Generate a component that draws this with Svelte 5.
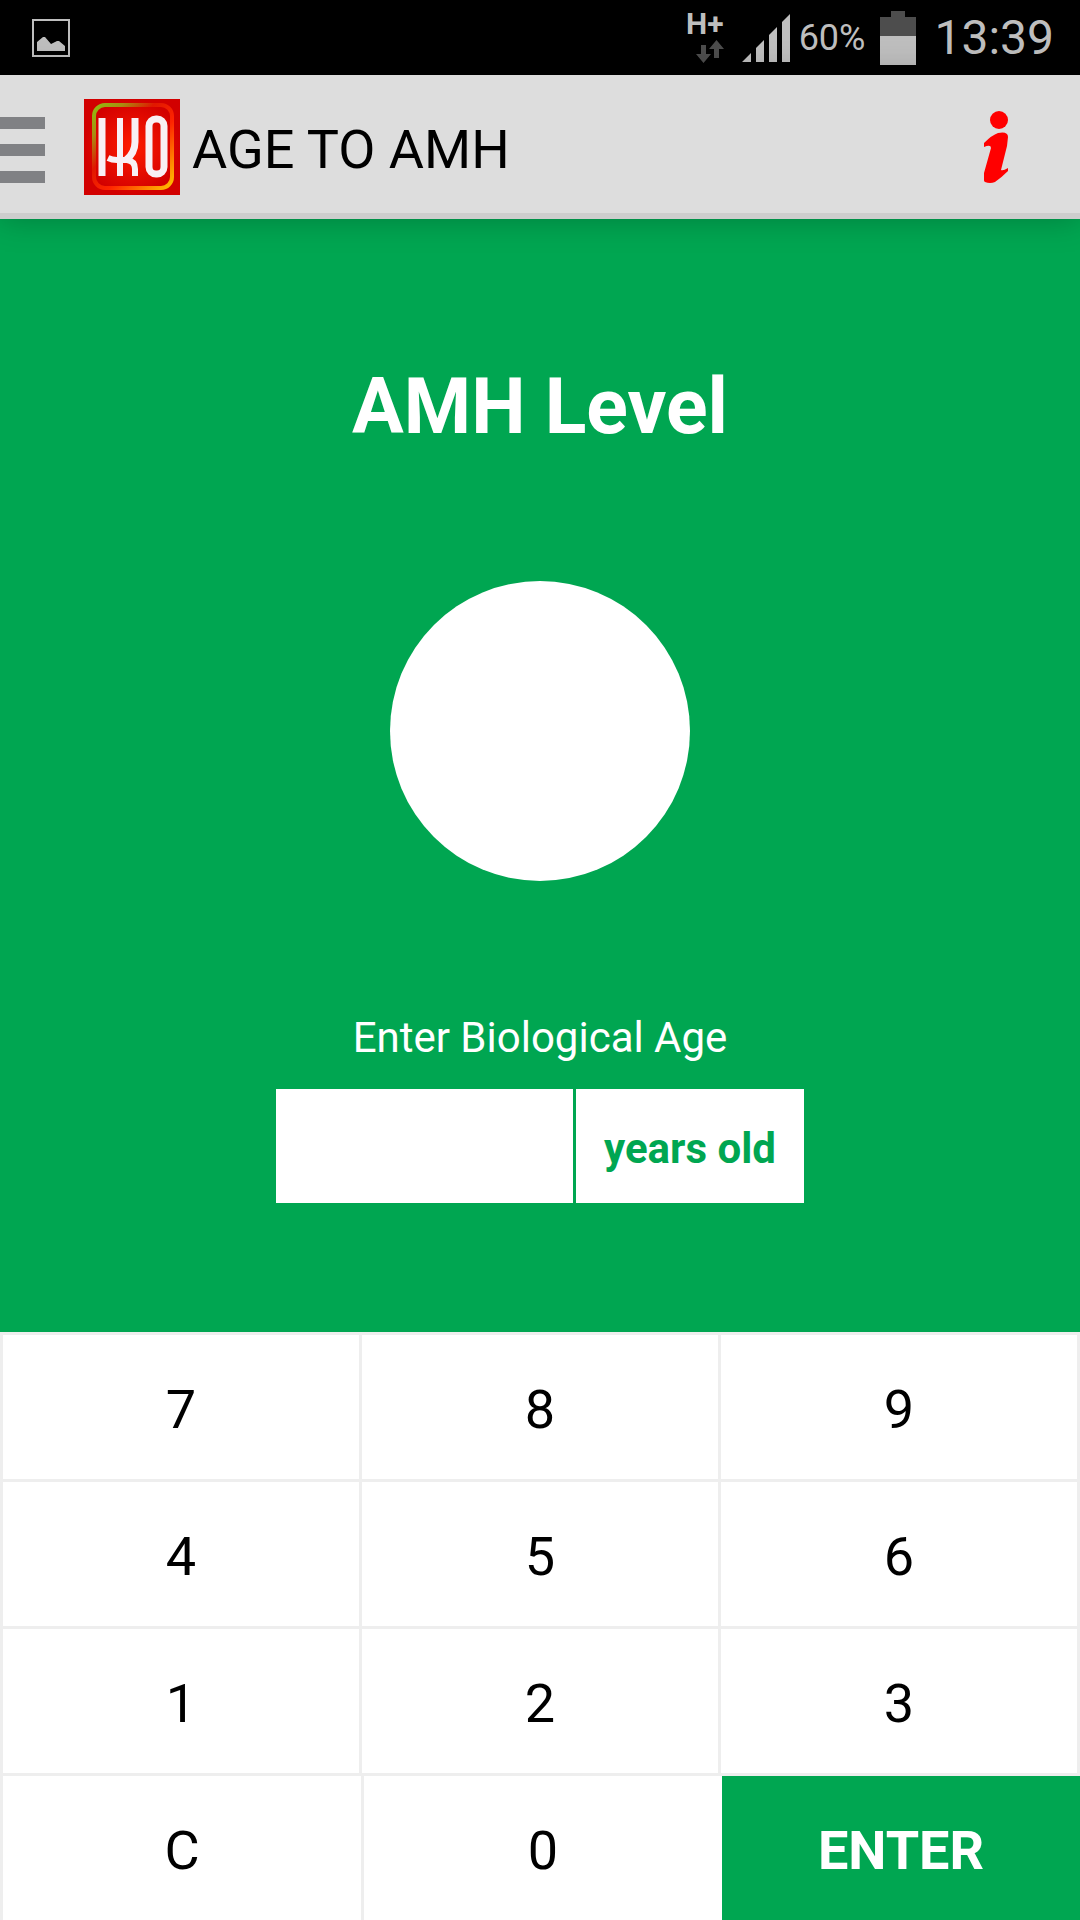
<script>
	const keyRows = [
		['7', '8', '9'],
		['4', '5', '6'],
		['1', '2', '3']
	];

	const MAX_DIGITS = 2;

	let age = $state('');
	let level = $state('');

	/** @param {string} digit */
	function press(digit) {
		if (age.length >= MAX_DIGITS) return;
		age += digit;
	}

	function clear() {
		age = '';
		level = '';
	}
</script>

<div class="screen">
	<div class="status-bar">
		<svg class="picture-icon" viewBox="0 0 38 38" aria-hidden="true">
			<rect x="1" y="1" width="36" height="36" fill="none" stroke="#bebebe" stroke-width="2" />
			<path d="M5 32V23L11 18H13L19 25L25 22H27L33 27V32Z" fill="#bebebe" />
		</svg>

		<div class="status-right">
			<div class="network">
				<span class="network-type">H+</span>
				<svg viewBox="0 0 28 23" aria-hidden="true">
					<path d="M5 5H10V14H15L7.500 23L0 14H5Z" fill="#4d4d4d" />
					<path d="M18 18H23V9H28L20.500 0L13 9H18Z" fill="#4d4d4d" />
				</svg>
			</div>
			<svg class="signal-icon" viewBox="0 0 48 48" aria-hidden="true">
				<path
					d="M0 48L9 39V48ZM14 48V34L22 26V48ZM27 48V21L35 13V48ZM40 48V8L48 0V48Z"
					fill="#bebebe"
				/>
			</svg>
			<span class="percent">60%</span>
			<svg class="battery-icon" viewBox="0 0 36 54" aria-hidden="true">
				<path d="M11 0H25V6H36V25H0V6H11Z" fill="#4d4d4d" />
				<rect y="25" width="36" height="29" fill="#bebebe" />
			</svg>
			<time class="clock">13:39</time>
		</div>
	</div>

	<header class="app-bar">
		<button type="button" class="menu-btn" aria-label="Open menu">
			<span></span>
			<span></span>
			<span></span>
		</button>
		<svg class="logo" viewBox="0 0 96 96" role="img" aria-label="IKO">
			<defs>
				<radialGradient id="logo-bg">
					<stop offset="0" stop-color="#ff1c00" />
					<stop offset="1" stop-color="#d20000" />
				</radialGradient>
				<linearGradient id="logo-frame" x1="0" y1="0" x2="1" y2="1">
					<stop offset="0" stop-color="#8fbe10" />
					<stop offset="0.180" stop-color="#a98c10" />
					<stop offset="0.380" stop-color="#e01800" />
					<stop offset="0.600" stop-color="#ff2400" />
					<stop offset="0.850" stop-color="#ff8a00" />
					<stop offset="1" stop-color="#ffc000" />
				</linearGradient>
			</defs>
			<rect width="96" height="96" fill="#d20000" />
			<rect width="96" height="96" fill="url(#logo-bg)" />
			<rect x="10" y="6" width="78" height="83" rx="11" fill="none" stroke="url(#logo-frame)" stroke-width="4" />
			<g fill="none" stroke="#f8f0f4" stroke-width="6">
				<path d="M18 19V77" stroke-width="7" />
				<path d="M36 19V77" />
				<path d="M51 19V43Q51 54 42 61" stroke-width="7" />
				<path d="M24 59Q28 61 33 61H43Q51 62 51 70V77" />
				<rect x="65" y="20" width="15" height="55" rx="7" stroke-width="7" />
			</g>
		</svg>
		<h1>AGE TO AMH</h1>
		<button type="button" class="info-btn" aria-label="Information">
			<svg viewBox="0 0 24 72" aria-hidden="true">
				<circle cx="15" cy="9" r="9" fill="#f00" />
				<path
					d="M0 32Q8 24 14 22Q24 20 24 26L23 35L17 59Q19 60 24 57V60Q17 67 11 71Q6 73 1 71Q-1 70 0 62L7 37Q7 33 0 36Z"
					fill="#f00"
				/>
			</svg>
		</button>
	</header>

	<main class="result">
		<h2>AMH Level</h2>
		<output class="level" for="age">{level}</output>
		<label for="age">Enter Biological Age</label>
		<div class="age-field">
			<input id="age" type="text" inputmode="none" maxlength={MAX_DIGITS} bind:value={age} />
			<span class="unit">years old</span>
		</div>
	</main>

	<div class="keypad">
		{#each keyRows as row}
			<div class="key-row">
				{#each row as digit}
					<button type="button" class="key" onclick={() => press(digit)}>{digit}</button>
				{/each}
			</div>
		{/each}
		<div class="key-row last">
			<button type="button" class="key" onclick={clear}>C</button>
			<button type="button" class="key zero" onclick={() => press('0')}>0</button>
			<button type="button" class="key enter">ENTER</button>
		</div>
	</div>
</div>

<style>
	:global(body) {
		margin: 0;
	}

	.screen {
		display: flex;
		flex-direction: column;
		min-height: 100vh;
		background: #00a651;
		font-family: Roboto, 'Noto Sans', sans-serif;
	}

	button {
		padding: 0;
		border: none;
		border-radius: 0;
		background: transparent;
		font-family: inherit;
		cursor: pointer;
	}

	/* Status bar */
	.status-bar {
		display: flex;
		align-items: center;
		justify-content: space-between;
		height: 75px;
		padding: 0 26px 0 32px;
		background: #000;
		color: #bebebe;
	}

	.picture-icon {
		width: 38px;
		height: 38px;
	}

	.status-right {
		display: flex;
		align-items: center;
	}

	.network {
		display: flex;
		flex-direction: column;
		gap: 4px;
		align-items: flex-end;
		margin-right: 18px;
	}

	.network-type {
		font-size: 30px;
		font-weight: 700;
		line-height: 24px;
	}

	.network svg {
		width: 28px;
		height: 23px;
	}

	.signal-icon {
		width: 48px;
		height: 48px;
		margin-right: 9px;
	}

	.percent {
		margin-right: 15px;
		font-size: 36px;
	}

	.battery-icon {
		width: 36px;
		height: 54px;
		margin-right: 18px;
	}

	.clock {
		font-size: 48px;
	}

	/* App bar */
	.app-bar {
		display: flex;
		align-items: center;
		height: 138px;
		padding-right: 72px;
		border-bottom: 6px solid #cdcdcd;
		background: #ddd;
		box-shadow: 0 0 30px rgba(0, 0, 0, 0.25);
	}

	.menu-btn {
		display: flex;
		flex-direction: column;
		gap: 15px;
		width: 45px;
		margin: 12px 39px 0 0;
	}

	.menu-btn span {
		height: 12px;
		background: #808184;
	}

	.logo {
		width: 96px;
		height: 96px;
		margin-top: 6px;
	}

	h1 {
		flex: 1;
		margin: 12px 0 0 12px;
		font-size: 54px;
		font-weight: 400;
		line-height: 64px;
		color: #000;
	}

	.info-btn {
		margin-top: 6px;
	}

	.info-btn svg {
		display: block;
		width: 24px;
		height: 72px;
	}

	/* Result panel */
	.result {
		display: flex;
		flex: 1;
		flex-direction: column;
		align-items: center;
		color: #fff;
	}

	h2 {
		margin: 142px 0 128px;
		font-size: 77px;
		font-weight: 700;
		line-height: 92px;
	}

	.level {
		display: flex;
		align-items: center;
		justify-content: center;
		width: 300px;
		height: 300px;
		border-radius: 50%;
		background: #fff;
		color: #00a651;
		font-size: 77px;
		font-weight: 700;
	}

	label {
		margin: 132px 0 26px;
		font-size: 42px;
		line-height: 50px;
	}

	.age-field {
		display: flex;
		gap: 3px;
		height: 114px;
	}

	.age-field input {
		box-sizing: border-box;
		width: 297px;
		padding: 0 24px;
		border: none;
		border-radius: 0;
		outline: none;
		background: #fff;
		color: #00a651;
		font-family: inherit;
		font-size: 42px;
		font-weight: 700;
		text-align: center;
	}

	.unit {
		display: flex;
		align-items: center;
		padding: 4px 28px 0;
		background: #fff;
		color: #00a651;
		font-size: 42px;
		font-weight: 700;
	}

	/* Keypad */
	.keypad {
		display: flex;
		flex-direction: column;
		gap: 3px;
		padding-top: 3px;
		background: #eee;
	}

	.key-row {
		display: flex;
		gap: 3px;
		padding: 0 3px;
	}

	.key-row.last {
		padding-right: 0;
	}

	.key {
		flex: 1;
		height: 144px;
		padding-top: 4px;
		background: #fff;
		color: #000;
		font-size: 54px;
	}

	.key.zero {
		margin-right: -3px;
	}

	.key.enter {
		background: #00a651;
		color: #fff;
		font-weight: 700;
	}
</style>
